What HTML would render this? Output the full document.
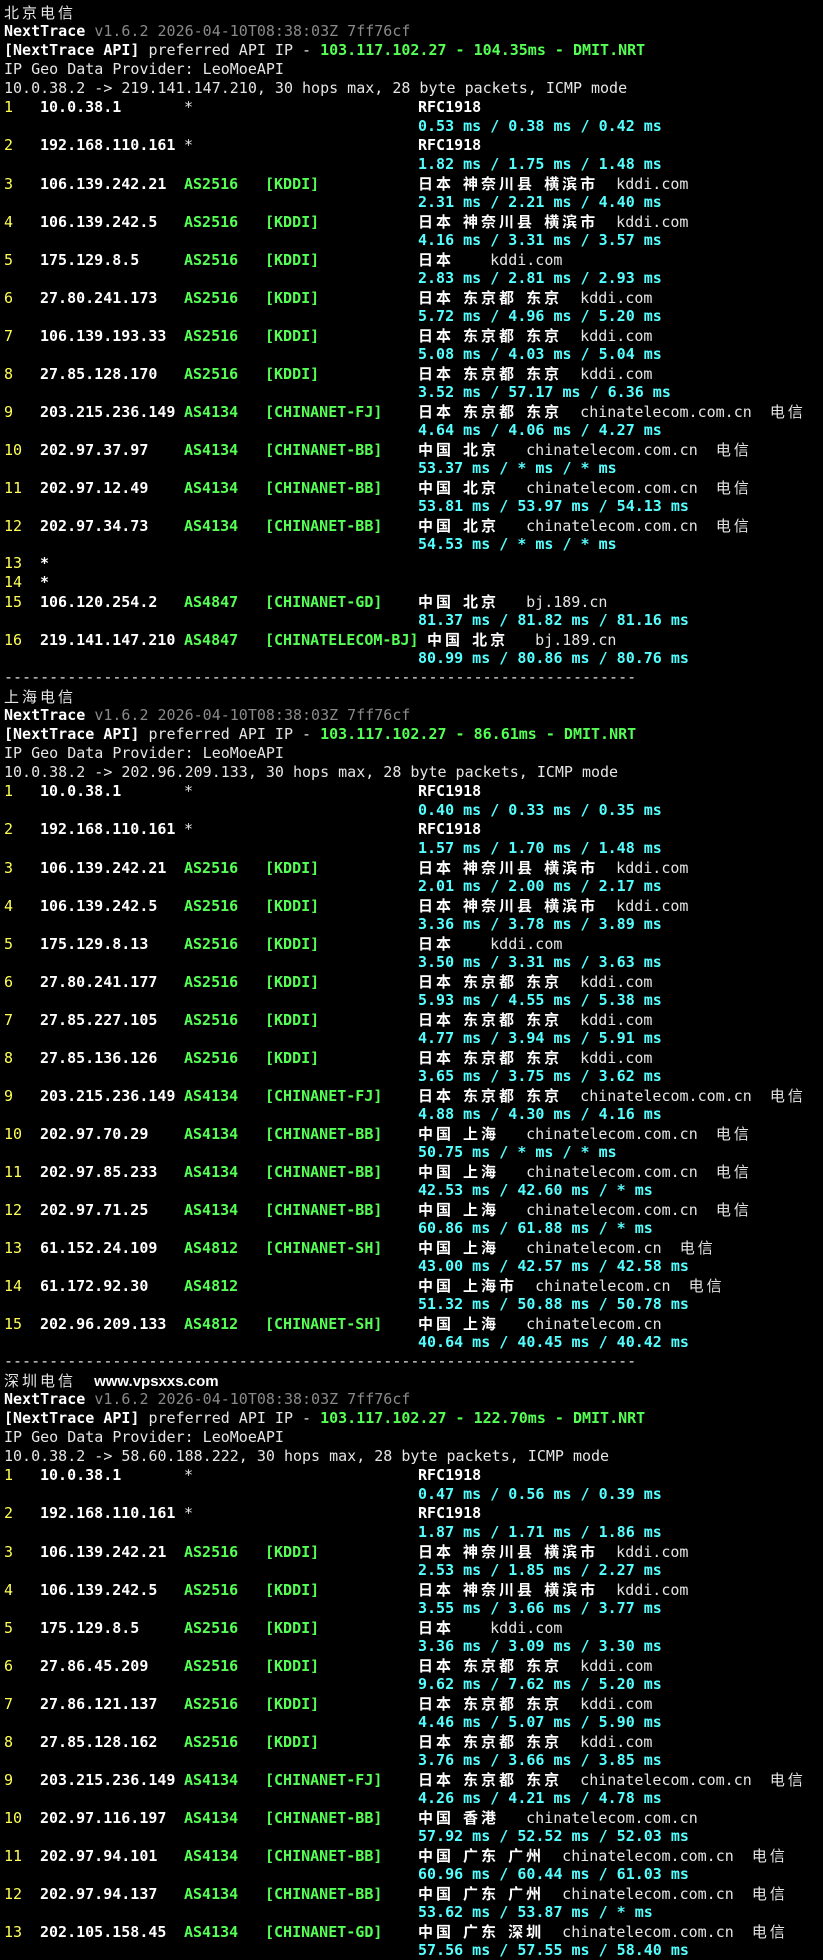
<!DOCTYPE html>
<html><head><meta charset="utf-8">
<style>
html,body{margin:0;background:#000}
body{width:823px;height:1957px;overflow:hidden;font:15px "DejaVu Sans Mono","Liberation Mono","Noto Sans CJK SC",monospace;color:#e6e6e6;padding-top:3px;box-sizing:border-box}
div{height:19px;line-height:19px;white-space:pre;padding-left:4px;overflow:hidden}
.h,.i,.a,.t{display:inline-block}
.h{width:36px;color:#ffff55}
.i{width:144px;color:#fff;font-weight:bold}
.a{width:81px;color:#55ff55;font-weight:bold}
.a.s{color:#e6e6e6;font-weight:normal}
.t{width:153px;color:#55ff55;font-weight:bold}
.m{padding-left:418px;color:#55ffff;font-weight:bold}
b{color:#fff}
i{font-style:normal;font-family:"Noto Sans CJK SC",sans-serif;letter-spacing:3px}
.gr{color:#8a8a8a}
.gn{color:#55ff55;font-weight:bold}
.web{font-family:"Liberation Sans",sans-serif;font-weight:bold;color:#fff;font-size:15px}
</style></head><body>
<div><i>北京电信</i></div>
<div><b>NextTrace</b> <span class=gr>v1.6.2 2026-04-10T08:38:03Z 7ff76cf</span></div>
<div><b>[NextTrace API]</b> preferred API IP - <span class=gn>103.117.102.27 - 104.35ms - DMIT.NRT</span></div>
<div>IP Geo Data Provider: LeoMoeAPI</div>
<div>10.0.38.2 -&gt; 219.141.147.210, 30 hops max, 28 byte packets, ICMP mode</div>
<div><span class=h>1</span><span class=i>10.0.38.1</span><span class="a s">*</span><span class=t></span><b>RFC1918</b></div>
<div class=m>0.53 ms / 0.38 ms / 0.42 ms</div>
<div><span class=h>2</span><span class=i>192.168.110.161</span><span class="a s">*</span><span class=t></span><b>RFC1918</b></div>
<div class=m>1.82 ms / 1.75 ms / 1.48 ms</div>
<div><span class=h>3</span><span class=i>106.139.242.21</span><span class=a>AS2516</span><span class=t>[KDDI]</span><b><i>日本</i> <i>神奈川县</i> <i>横滨市</i></b>  kddi.com</div>
<div class=m>2.31 ms / 2.21 ms / 4.40 ms</div>
<div><span class=h>4</span><span class=i>106.139.242.5</span><span class=a>AS2516</span><span class=t>[KDDI]</span><b><i>日本</i> <i>神奈川县</i> <i>横滨市</i></b>  kddi.com</div>
<div class=m>4.16 ms / 3.31 ms / 3.57 ms</div>
<div><span class=h>5</span><span class=i>175.129.8.5</span><span class=a>AS2516</span><span class=t>[KDDI]</span><b><i>日本</i></b>    kddi.com</div>
<div class=m>2.83 ms / 2.81 ms / 2.93 ms</div>
<div><span class=h>6</span><span class=i>27.80.241.173</span><span class=a>AS2516</span><span class=t>[KDDI]</span><b><i>日本</i> <i>东京都</i> <i>东京</i></b>  kddi.com</div>
<div class=m>5.72 ms / 4.96 ms / 5.20 ms</div>
<div><span class=h>7</span><span class=i>106.139.193.33</span><span class=a>AS2516</span><span class=t>[KDDI]</span><b><i>日本</i> <i>东京都</i> <i>东京</i></b>  kddi.com</div>
<div class=m>5.08 ms / 4.03 ms / 5.04 ms</div>
<div><span class=h>8</span><span class=i>27.85.128.170</span><span class=a>AS2516</span><span class=t>[KDDI]</span><b><i>日本</i> <i>东京都</i> <i>东京</i></b>  kddi.com</div>
<div class=m>3.52 ms / 57.17 ms / 6.36 ms</div>
<div><span class=h>9</span><span class=i>203.215.236.149</span><span class=a>AS4134</span><span class=t>[CHINANET-FJ]</span><b><i>日本</i> <i>东京都</i> <i>东京</i></b>  chinatelecom.com.cn  <i>电信</i></div>
<div class=m>4.64 ms / 4.06 ms / 4.27 ms</div>
<div><span class=h>10</span><span class=i>202.97.37.97</span><span class=a>AS4134</span><span class=t>[CHINANET-BB]</span><b><i>中国</i> <i>北京</i></b>   chinatelecom.com.cn  <i>电信</i></div>
<div class=m>53.37 ms / * ms / * ms</div>
<div><span class=h>11</span><span class=i>202.97.12.49</span><span class=a>AS4134</span><span class=t>[CHINANET-BB]</span><b><i>中国</i> <i>北京</i></b>   chinatelecom.com.cn  <i>电信</i></div>
<div class=m>53.81 ms / 53.97 ms / 54.13 ms</div>
<div><span class=h>12</span><span class=i>202.97.34.73</span><span class=a>AS4134</span><span class=t>[CHINANET-BB]</span><b><i>中国</i> <i>北京</i></b>   chinatelecom.com.cn  <i>电信</i></div>
<div class=m>54.53 ms / * ms / * ms</div>
<div><span class=h>13</span><b>*</b></div>
<div><span class=h>14</span><b>*</b></div>
<div><span class=h>15</span><span class=i>106.120.254.2</span><span class=a>AS4847</span><span class=t>[CHINANET-GD]</span><b><i>中国</i> <i>北京</i></b>   bj.189.cn</div>
<div class=m>81.37 ms / 81.82 ms / 81.16 ms</div>
<div><span class=h>16</span><span class=i>219.141.147.210</span><span class=a>AS4847</span><span class=t>[CHINATELECOM-BJ]</span> <b><i>中国</i> <i>北京</i></b>   bj.189.cn</div>
<div class=m>80.99 ms / 80.86 ms / 80.76 ms</div>
<div>----------------------------------------------------------------------</div>
<div><i>上海电信</i></div>
<div><b>NextTrace</b> <span class=gr>v1.6.2 2026-04-10T08:38:03Z 7ff76cf</span></div>
<div><b>[NextTrace API]</b> preferred API IP - <span class=gn>103.117.102.27 - 86.61ms - DMIT.NRT</span></div>
<div>IP Geo Data Provider: LeoMoeAPI</div>
<div>10.0.38.2 -&gt; 202.96.209.133, 30 hops max, 28 byte packets, ICMP mode</div>
<div><span class=h>1</span><span class=i>10.0.38.1</span><span class="a s">*</span><span class=t></span><b>RFC1918</b></div>
<div class=m>0.40 ms / 0.33 ms / 0.35 ms</div>
<div><span class=h>2</span><span class=i>192.168.110.161</span><span class="a s">*</span><span class=t></span><b>RFC1918</b></div>
<div class=m>1.57 ms / 1.70 ms / 1.48 ms</div>
<div><span class=h>3</span><span class=i>106.139.242.21</span><span class=a>AS2516</span><span class=t>[KDDI]</span><b><i>日本</i> <i>神奈川县</i> <i>横滨市</i></b>  kddi.com</div>
<div class=m>2.01 ms / 2.00 ms / 2.17 ms</div>
<div><span class=h>4</span><span class=i>106.139.242.5</span><span class=a>AS2516</span><span class=t>[KDDI]</span><b><i>日本</i> <i>神奈川县</i> <i>横滨市</i></b>  kddi.com</div>
<div class=m>3.36 ms / 3.78 ms / 3.89 ms</div>
<div><span class=h>5</span><span class=i>175.129.8.13</span><span class=a>AS2516</span><span class=t>[KDDI]</span><b><i>日本</i></b>    kddi.com</div>
<div class=m>3.50 ms / 3.31 ms / 3.63 ms</div>
<div><span class=h>6</span><span class=i>27.80.241.177</span><span class=a>AS2516</span><span class=t>[KDDI]</span><b><i>日本</i> <i>东京都</i> <i>东京</i></b>  kddi.com</div>
<div class=m>5.93 ms / 4.55 ms / 5.38 ms</div>
<div><span class=h>7</span><span class=i>27.85.227.105</span><span class=a>AS2516</span><span class=t>[KDDI]</span><b><i>日本</i> <i>东京都</i> <i>东京</i></b>  kddi.com</div>
<div class=m>4.77 ms / 3.94 ms / 5.91 ms</div>
<div><span class=h>8</span><span class=i>27.85.136.126</span><span class=a>AS2516</span><span class=t>[KDDI]</span><b><i>日本</i> <i>东京都</i> <i>东京</i></b>  kddi.com</div>
<div class=m>3.65 ms / 3.75 ms / 3.62 ms</div>
<div><span class=h>9</span><span class=i>203.215.236.149</span><span class=a>AS4134</span><span class=t>[CHINANET-FJ]</span><b><i>日本</i> <i>东京都</i> <i>东京</i></b>  chinatelecom.com.cn  <i>电信</i></div>
<div class=m>4.88 ms / 4.30 ms / 4.16 ms</div>
<div><span class=h>10</span><span class=i>202.97.70.29</span><span class=a>AS4134</span><span class=t>[CHINANET-BB]</span><b><i>中国</i> <i>上海</i></b>   chinatelecom.com.cn  <i>电信</i></div>
<div class=m>50.75 ms / * ms / * ms</div>
<div><span class=h>11</span><span class=i>202.97.85.233</span><span class=a>AS4134</span><span class=t>[CHINANET-BB]</span><b><i>中国</i> <i>上海</i></b>   chinatelecom.com.cn  <i>电信</i></div>
<div class=m>42.53 ms / 42.60 ms / * ms</div>
<div><span class=h>12</span><span class=i>202.97.71.25</span><span class=a>AS4134</span><span class=t>[CHINANET-BB]</span><b><i>中国</i> <i>上海</i></b>   chinatelecom.com.cn  <i>电信</i></div>
<div class=m>60.86 ms / 61.88 ms / * ms</div>
<div><span class=h>13</span><span class=i>61.152.24.109</span><span class=a>AS4812</span><span class=t>[CHINANET-SH]</span><b><i>中国</i> <i>上海</i></b>   chinatelecom.cn  <i>电信</i></div>
<div class=m>43.00 ms / 42.57 ms / 42.58 ms</div>
<div><span class=h>14</span><span class=i>61.172.92.30</span><span class=a>AS4812</span><span class=t></span><b><i>中国</i> <i>上海市</i></b>  chinatelecom.cn  <i>电信</i></div>
<div class=m>51.32 ms / 50.88 ms / 50.78 ms</div>
<div><span class=h>15</span><span class=i>202.96.209.133</span><span class=a>AS4812</span><span class=t>[CHINANET-SH]</span><b><i>中国</i> <i>上海</i></b>   chinatelecom.cn</div>
<div class=m>40.64 ms / 40.45 ms / 40.42 ms</div>
<div>----------------------------------------------------------------------</div>
<div><i>深圳电信</i>  <span class=web>www.vpsxxs.com</span></div>
<div><b>NextTrace</b> <span class=gr>v1.6.2 2026-04-10T08:38:03Z 7ff76cf</span></div>
<div><b>[NextTrace API]</b> preferred API IP - <span class=gn>103.117.102.27 - 122.70ms - DMIT.NRT</span></div>
<div>IP Geo Data Provider: LeoMoeAPI</div>
<div>10.0.38.2 -&gt; 58.60.188.222, 30 hops max, 28 byte packets, ICMP mode</div>
<div><span class=h>1</span><span class=i>10.0.38.1</span><span class="a s">*</span><span class=t></span><b>RFC1918</b></div>
<div class=m>0.47 ms / 0.56 ms / 0.39 ms</div>
<div><span class=h>2</span><span class=i>192.168.110.161</span><span class="a s">*</span><span class=t></span><b>RFC1918</b></div>
<div class=m>1.87 ms / 1.71 ms / 1.86 ms</div>
<div><span class=h>3</span><span class=i>106.139.242.21</span><span class=a>AS2516</span><span class=t>[KDDI]</span><b><i>日本</i> <i>神奈川县</i> <i>横滨市</i></b>  kddi.com</div>
<div class=m>2.53 ms / 1.85 ms / 2.27 ms</div>
<div><span class=h>4</span><span class=i>106.139.242.5</span><span class=a>AS2516</span><span class=t>[KDDI]</span><b><i>日本</i> <i>神奈川县</i> <i>横滨市</i></b>  kddi.com</div>
<div class=m>3.55 ms / 3.66 ms / 3.77 ms</div>
<div><span class=h>5</span><span class=i>175.129.8.5</span><span class=a>AS2516</span><span class=t>[KDDI]</span><b><i>日本</i></b>    kddi.com</div>
<div class=m>3.36 ms / 3.09 ms / 3.30 ms</div>
<div><span class=h>6</span><span class=i>27.86.45.209</span><span class=a>AS2516</span><span class=t>[KDDI]</span><b><i>日本</i> <i>东京都</i> <i>东京</i></b>  kddi.com</div>
<div class=m>9.62 ms / 7.62 ms / 5.20 ms</div>
<div><span class=h>7</span><span class=i>27.86.121.137</span><span class=a>AS2516</span><span class=t>[KDDI]</span><b><i>日本</i> <i>东京都</i> <i>东京</i></b>  kddi.com</div>
<div class=m>4.46 ms / 5.07 ms / 5.90 ms</div>
<div><span class=h>8</span><span class=i>27.85.128.162</span><span class=a>AS2516</span><span class=t>[KDDI]</span><b><i>日本</i> <i>东京都</i> <i>东京</i></b>  kddi.com</div>
<div class=m>3.76 ms / 3.66 ms / 3.85 ms</div>
<div><span class=h>9</span><span class=i>203.215.236.149</span><span class=a>AS4134</span><span class=t>[CHINANET-FJ]</span><b><i>日本</i> <i>东京都</i> <i>东京</i></b>  chinatelecom.com.cn  <i>电信</i></div>
<div class=m>4.26 ms / 4.21 ms / 4.78 ms</div>
<div><span class=h>10</span><span class=i>202.97.116.197</span><span class=a>AS4134</span><span class=t>[CHINANET-BB]</span><b><i>中国</i> <i>香港</i></b>   chinatelecom.com.cn</div>
<div class=m>57.92 ms / 52.52 ms / 52.03 ms</div>
<div><span class=h>11</span><span class=i>202.97.94.101</span><span class=a>AS4134</span><span class=t>[CHINANET-BB]</span><b><i>中国</i> <i>广东</i> <i>广州</i></b>  chinatelecom.com.cn  <i>电信</i></div>
<div class=m>60.96 ms / 60.44 ms / 61.03 ms</div>
<div><span class=h>12</span><span class=i>202.97.94.137</span><span class=a>AS4134</span><span class=t>[CHINANET-BB]</span><b><i>中国</i> <i>广东</i> <i>广州</i></b>  chinatelecom.com.cn  <i>电信</i></div>
<div class=m>53.62 ms / 53.87 ms / * ms</div>
<div><span class=h>13</span><span class=i>202.105.158.45</span><span class=a>AS4134</span><span class=t>[CHINANET-GD]</span><b><i>中国</i> <i>广东</i> <i>深圳</i></b>  chinatelecom.com.cn  <i>电信</i></div>
<div class=m>57.56 ms / 57.55 ms / 58.40 ms</div>
</body></html>
